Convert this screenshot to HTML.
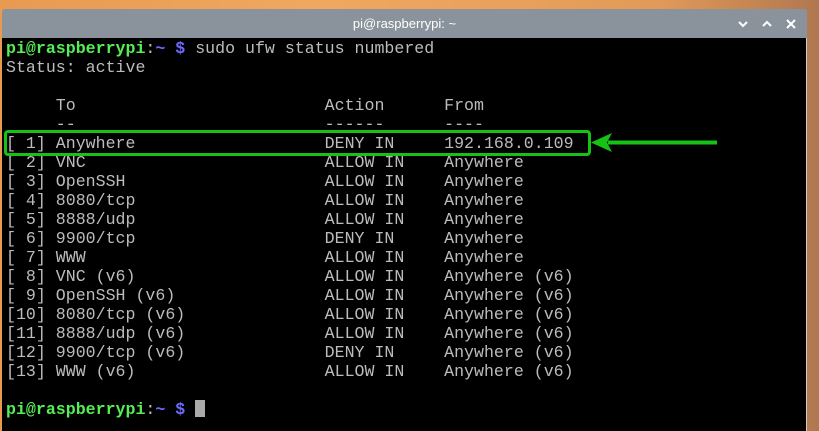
<!DOCTYPE html>
<html><head><style>
body{margin:0;width:819px;height:431px;overflow:hidden;background:linear-gradient(90deg,#e89a50 0%,#f0a860 40%,#e29a58 80%,#b07850 100%);position:relative;font-family:"Liberation Mono",monospace}
.tb{position:absolute;left:2px;top:9px;width:805px;height:29px;background:#8a939b;border-radius:3px 3px 0 0;color:#fff;font:13px "Liberation Sans",sans-serif;text-align:center;line-height:29px}
.term{position:absolute;left:2px;top:38px;width:804px;height:393px;background:#000;border-right:1px solid #ccc}
pre{margin:0;position:absolute;left:4px;top:1px;font-size:16.6px;line-height:19px;color:#bcbcbc;font-family:"Liberation Mono",monospace}
.g{color:#55ee55;font-weight:bold}.b{color:#6a6aff;font-weight:bold}
.box{position:absolute;left:4px;top:130px;width:581px;height:20px;border:3px solid #17c217;border-radius:4px}
.cur{display:inline-block;width:10px;height:17px;background:#aaa;vertical-align:-3px}
</style></head><body>
<div class="tb">pi@raspberrypi: ~</div>
<svg style="position:absolute;left:735px;top:18px" width="70" height="12"><path d="M4 4l4 4 4-4" stroke="#fff" stroke-width="2" fill="none"/><path d="M28 8l4-4 4 4" stroke="#fff" stroke-width="2" fill="none"/><path d="M52 2l8 8M60 2l-8 8" stroke="#fff" stroke-width="2" fill="none"/></svg>
<div class="term"><pre><span class="g">pi@raspberrypi</span>:<span class="b">~ $</span> sudo ufw status numbered
Status: active

     To                         Action      From
     --                         ------      ----
[ 1] Anywhere                   DENY IN     192.168.0.109
[ 2] VNC                        ALLOW IN    Anywhere
[ 3] OpenSSH                    ALLOW IN    Anywhere
[ 4] 8080/tcp                   ALLOW IN    Anywhere
[ 5] 8888/udp                   ALLOW IN    Anywhere
[ 6] 9900/tcp                   DENY IN     Anywhere
[ 7] WWW                        ALLOW IN    Anywhere
[ 8] VNC (v6)                   ALLOW IN    Anywhere (v6)
[ 9] OpenSSH (v6)               ALLOW IN    Anywhere (v6)
[10] 8080/tcp (v6)              ALLOW IN    Anywhere (v6)
[11] 8888/udp (v6)              ALLOW IN    Anywhere (v6)
[12] 9900/tcp (v6)              DENY IN     Anywhere (v6)
[13] WWW (v6)                   ALLOW IN    Anywhere (v6)

<span class="g">pi@raspberrypi</span>:<span class="b">~ $</span> <span class="cur"></span></pre></div>
<div class="box"></div>
<svg style="position:absolute;left:588px;top:130px" width="135" height="25"><path d="M20 12.5H129" stroke="#17c217" stroke-width="4"/><path d="M3 12.5L24 3L19 12.5L24 22Z" fill="#17c217"/></svg>
</body></html>
